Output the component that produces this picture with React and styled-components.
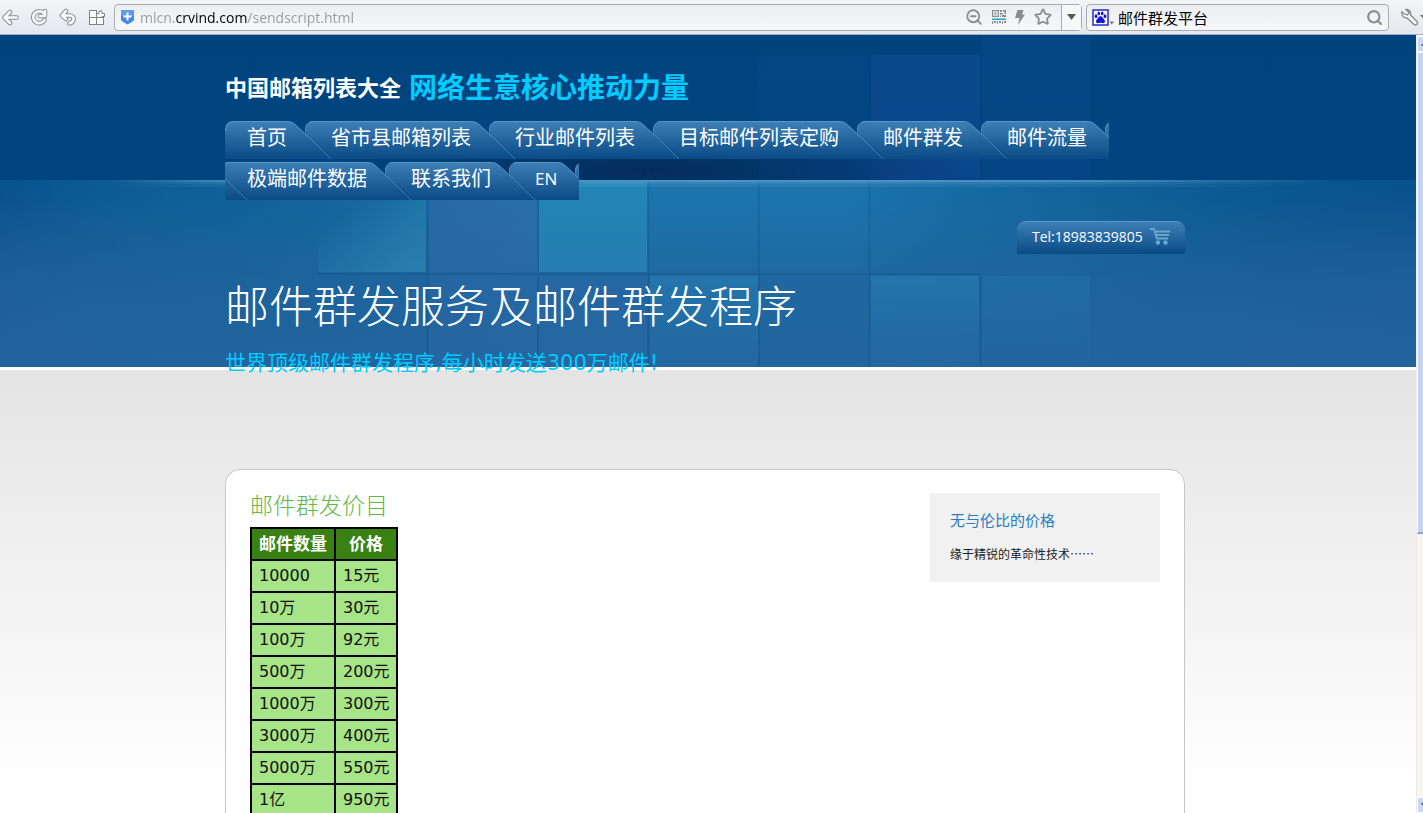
import React from 'react'
import styled, { createGlobalStyle, css } from 'styled-components'
import { ZoomOut, Search, Star } from 'lucide-react'

const latin = `'Open Sans', 'Noto Sans CJK SC', sans-serif`
const wide = `'DejaVu Sans', 'Noto Sans CJK SC', sans-serif`
const cjk = `'Noto Sans CJK SC', sans-serif`

const menu = [
  { title: '首页' },
  { title: '省市县邮箱列表' },
  { title: '行业邮件列表' },
  { title: '目标邮件列表定购' },
  { title: '邮件群发' },
  { title: '邮件流量' },
  { title: '极端邮件数据' },
  { title: '联系我们' },
  { title: 'EN', small: true },
]

const prices = [
  ['10000', '15元'],
  ['10万', '30元'],
  ['100万', '92元'],
  ['500万', '200元'],
  ['1000万', '300元'],
  ['3000万', '400元'],
  ['5000万', '550元'],
  ['1亿', '950元'],
]

// browser icons: grey outline with a white core
const Outlined = ({ d, size = 18 }) => (
  <svg width={size} height={size} viewBox="0 0 18 18" fill="none" strokeLinejoin="round">
    <path d={d} stroke="#8d8f93" strokeWidth="4.6" strokeLinecap="round" />
    <path d={d} stroke="#fafbfc" strokeWidth="2.6" strokeLinecap="round" />
  </svg>
)

const Panels = () => (
  <svg width="18" height="18" viewBox="0 0 18 18" fill="#fafbfc" stroke="#808286">
    <rect x="1.500" y="2.500" width="7" height="7" />
    <rect x="1.500" y="9.500" width="7" height="7" />
    <rect x="8.500" y="9.500" width="7" height="7" />
    <path d="M8.500 9.500v-4h2.500V3h3v2.500h2.500v3H14v1z" />
  </svg>
)

const Shield = () => (
  <svg width="15" height="16" viewBox="0 0 15 16">
    <path d="M1 1h13v9.500q0 1.500-1.500 2L7.500 15.500 2.500 12.500q-1.500-.5-1.500-2z" fill="#3f87e8" />
    <path d="M1 1h13v6H1z" fill="#5b9cf0" />
    <path d="M7.500 3.500v8M3.500 7.500h8" stroke="#fff" strokeWidth="2" />
  </svg>
)

const Barcode = () => (
  <svg width="14" height="14" viewBox="0 0 14 14" fill="#8a8c90">
    <path d="M0 0h7v7H0zM1.200 1.200v4.600h4.600V1.200z" fillRule="evenodd" />
    <path d="M2.500 2.500h2v2h-2zM8 0h2v2H8zM11 0h3v4h-1.500V1.500H11zM8 3h3v1.500H8zM10 5h4v2h-4zM8 5.500h1V7H8z" />
    <path d="M0 8.500h14V10H0z" fill="#1ba7c4" />
    <path d="M0 11h1v3H0zM2 11h2v2H2zM5 11h1v3H5zM7 11h2v2H7zM10 11h1v3h-1zM12 11h2v2h-2z" />
  </svg>
)

const Bolt = () => (
  <svg width="10" height="15" viewBox="0 0 10 15">
    <path d="M2.500 0h6L7 4.500h3L3 15l1.500-7H0z" fill="#8a8c90" />
  </svg>
)

const Paw = () => (
  <svg width="22" height="17" viewBox="0 0 22 17">
    <rect x="1" y="1" width="15" height="15" fill="#fff" stroke="#1a1ac8" strokeWidth="1.400" />
    <g fill="#1414e0">
      <ellipse cx="4" cy="7.200" rx="1.400" ry="1.900" />
      <ellipse cx="6.800" cy="4.400" rx="1.300" ry="1.900" />
      <ellipse cx="10.200" cy="4.400" rx="1.300" ry="1.900" />
      <ellipse cx="13" cy="7.200" rx="1.400" ry="1.900" />
      <path d="M8.500 7.200c2 0 2 1.800 3.500 3s1.200 4-.8 4c-1.200 0-1.600-.4-2.700-.4s-1.500.4-2.700.4c-2 0-2.300-2.800-.8-4s1.500-3 3.500-3z" />
    </g>
    <path d="M17.500 12.500h4.500l-2.200 3z" fill="#777" />
  </svg>
)

const Cart = () => (
  <svg width="20" height="17" viewBox="0 0 20 17" fill="#6ba5cc">
    <path d="M0 0h4.600l.8 2.500H20v2H6.200l.4 1.500H19v2H7.200l.4 1.500H18v2H6L3.400 2H0z" />
    <circle cx="8" cy="14.500" r="2.200" />
    <circle cx="15.500" cy="14.500" r="2.200" />
  </svg>
)

const CapGradient = ({ id }) => (
  <linearGradient id={id} x1="0" y1="0" x2="0" y2="38" gradientUnits="userSpaceOnUse">
    <stop offset="0" stopColor="#3d7fb5" />
    <stop offset="1" stopColor="#0a4a86" />
  </linearGradient>
)

const LeftCap = ({ first }) => (
  <svg width="22" height="38" viewBox="0 0 22 38">
    <CapGradient id="capLeft" />
    {first ? (
      <>
        <path d="M0 38V9Q0 0 9 0h13v38z" fill="url(#capLeft)" />
        <path d="M0.500 10Q1 .5 9 .5h13" fill="none" stroke="#5b97c6" />
      </>
    ) : (
      <>
        <path d="M0 38V1l3-1h19v38z" fill="url(#capLeft)" />
        <path d="M3 16 22 35v3z" fill="#0a3a70" opacity=".15" />
        <path d="M0 1.500 3 .5h19" fill="none" stroke="#5b97c6" />
        <path d="M0 16 22 38" stroke="#5b97c6" opacity=".6" />
      </>
    )}
  </svg>
)

const RightCap = () => (
  <svg width="22" height="38" viewBox="0 0 22 38">
    <CapGradient id="capRight" />
    <path d="M0 38V0Q5 0 8 3l10 9V7q1-4 4-5.500V38z" fill="url(#capRight)" />
    <path d="M0 .5Q5 .5 8 3.500L22 16.500" fill="none" stroke="#5b97c6" opacity=".8" />
    <path d="M18.500 11V7q1-4 3.500-5.500" fill="none" stroke="#5b97c6" opacity=".7" />
  </svg>
)

// translucent squares behind the header
const Tiles = () => (
  <Backdrop viewBox="0 0 1416 332" preserveAspectRatio="xMidYMin slice" aria-hidden="true">
    <defs>
      <linearGradient id="lowerBase" x1="0" y1="0" x2="0" y2="1">
        <stop offset="0" stopColor="#08528e" />
        <stop offset="1" stopColor="#1a5994" />
      </linearGradient>
      <linearGradient id="lowerGlow" x1="0" y1="0" x2="1" y2="0">
        <stop offset="0" stopColor="#1b75ad" stopOpacity="0" />
        <stop offset=".15" stopColor="#12699f" stopOpacity=".6" />
        <stop offset=".4" stopColor="#1c74ac" />
        <stop offset=".6" stopColor="#1b74ac" />
        <stop offset=".8" stopColor="#12669c" stopOpacity=".7" />
        <stop offset="1" stopColor="#0b5a94" stopOpacity="0" />
      </linearGradient>
      <linearGradient id="lowerFade" x1="0" y1="0" x2="0" y2="1">
        <stop offset=".1" stopColor="#23639e" stopOpacity="0" />
        <stop offset=".55" stopColor="#21629c" stopOpacity=".7" />
        <stop offset="1" stopColor="#23649e" stopOpacity=".9" />
      </linearGradient>
      <linearGradient id="tileLight" x1="0" y1="0" x2="0" y2="1">
        <stop offset="0" stopColor="#2186b6" />
        <stop offset="1" stopColor="#267db3" />
      </linearGradient>
      <linearGradient id="tileUp" x1="0" y1="0" x2="0" y2="1">
        <stop offset="0" stopColor="#2377ad" stopOpacity=".9" />
        <stop offset="1" stopColor="#2468a2" stopOpacity=".6" />
      </linearGradient>
      <linearGradient id="tileSide" x1="0" y1="0" x2="1" y2="1">
        <stop offset=".3" stopColor="#2f93b8" stopOpacity="0" />
        <stop offset="1" stopColor="#2f86b0" stopOpacity=".75" />
      </linearGradient>
      <linearGradient id="violet" x1="0" y1="0" x2="0" y2="1">
        <stop offset="0" stopColor="#12509a" stopOpacity=".5" />
        <stop offset="1" stopColor="#0e4690" stopOpacity=".7" />
      </linearGradient>
      <radialGradient id="navShade">
        <stop offset="0" stopColor="#052450" stopOpacity=".75" />
        <stop offset="1" stopColor="#052450" stopOpacity="0" />
      </radialGradient>
      <linearGradient id="horizon" x1="0" y1="0" x2="1" y2="0">
        <stop offset="0" stopColor="#7ab4da" stopOpacity="0" />
        <stop offset=".1" stopColor="#7ab4da" stopOpacity=".5" />
        <stop offset=".8" stopColor="#7ab4da" stopOpacity=".5" />
        <stop offset="1" stopColor="#7ab4da" stopOpacity="0" />
      </linearGradient>
      <linearGradient id="lines" x1="0" y1="0" x2="0" y2="1">
        <stop offset="0" stopColor="#06406f" stopOpacity=".15" />
        <stop offset="1" stopColor="#06406f" stopOpacity=".25" />
      </linearGradient>
    </defs>

    <rect x="759" y="20" width="110" height="125" fill="url(#violet)" opacity=".35" />
    <rect x="871" y="20" width="109" height="125" fill="url(#violet)" />
    <rect x="982" y="0" width="109" height="145" fill="url(#violet)" opacity=".4" />
    <ellipse cx="650" cy="135" rx="320" ry="50" fill="url(#navShade)" />

    <rect y="145" width="1416" height="187" fill="url(#lowerBase)" />
    <rect y="145" width="1416" height="187" fill="url(#lowerGlow)" />
    <rect y="145" width="1416" height="187" fill="url(#lowerFade)" />

    <rect x="318" y="147" width="108" height="90" fill="url(#tileSide)" />
    <rect x="429" y="147" width="108" height="90" fill="#3a6ba8" opacity=".45" />
    <rect x="539" y="147" width="108" height="90" fill="url(#tileLight)" />
    <rect x="429" y="241" width="218" height="91" fill="#2c68a6" opacity=".4" />
    <rect x="650" y="241" width="108" height="91" fill="url(#tileUp)" />
    <rect x="871" y="241" width="108" height="91" fill="url(#tileUp)" />
    <rect x="982" y="241" width="108" height="91" fill="url(#tileUp)" opacity=".5" />
    <path
      d="M427.500 147v185M538 147v185M648.500 120v212M759 20v312M869.500 0v332M980.500 0v145M980.500 240v92M318 239h662"
      stroke="url(#lines)"
      strokeWidth="2"
    />

    <rect x="110" y="145" width="1220" height="2" fill="url(#horizon)" />
    <rect x="110" y="147" width="1220" height="2" fill="url(#horizon)" opacity=".5" />
    <rect x="110" y="149" width="1220" height="3" fill="url(#horizon)" opacity=".25" />
  </Backdrop>
)

const App = () => (
  <Shell>
    <GlobalStyle />
    <Toolbar>
      <IconButton aria-label="Back">
        <Outlined d="M9 4 3.500 9.500 9 15M4 9.500h11.500" />
      </IconButton>
      <IconButton aria-label="Reload">
        <Outlined d="M13.500 5A6 6 0 1 0 14.500 12M15 3v5h-5" />
      </IconButton>
      <IconButton aria-label="Undo">
        <Outlined d="M7 3 3 7.500 7 11M4 7.500h7q4 .5 3.500 4-.5 3-4 4" />
      </IconButton>
      <IconButton aria-label="Panels">
        <Panels />
      </IconButton>
      <Field grow={1}>
        <Shield />
        <Address aria-label="Address" defaultValue="mlcn.crvind.com/sendscript.html" />
        <Actions>
          <ZoomOut size={18} strokeWidth={2.4} />
          <Barcode />
          <Bolt />
          <Star size={18} strokeWidth={2.4} />
        </Actions>
        <DropButton aria-label="History">
          <svg width="9" height="6" viewBox="0 0 9 6">
            <path d="M0 0h9L4.500 6z" fill="#555" />
          </svg>
        </DropButton>
      </Field>
      <Field>
        <Paw />
        <Query aria-label="Search" defaultValue="邮件群发平台" />
        <Search size={17} strokeWidth={3} />
      </Field>
      <Tools>
        <IconButton aria-label="Settings">
          <svg width="19" height="18" viewBox="0 0 19 18">
            <path
              d="M5 1.500 8 4.500 6.500 7 3.500 6 1 4c-.5 3 1 6 5 6l7 6.500c2 1.500 4.500-1 3-3L9.500 7C10 3.500 8 1 5 1.500z"
              fill="#fafbfc"
              stroke="#85878b"
              strokeWidth="1.300"
            />
          </svg>
        </IconButton>
        <svg width="7" height="5" viewBox="0 0 7 5">
          <path d="M0 0h7L3.500 4z" fill="#777" />
        </svg>
      </Tools>
    </Toolbar>

    <Viewport>
      <Page>
        <Header>
          <Tiles />
          <Edges>
            <Brand>
              <Logo href="#">中国邮箱列表大全</Logo>
              <Slogan>网络生意核心推动力量</Slogan>
            </Brand>
            <nav>
              <Navigation>
                {menu.map((o, i) => (
                  <li key={o.title}>
                    <MenuLink href="#">
                      <LeftCap first={i === 0} />
                      <MenuLabel small={o.small ? 1 : 0}>{o.title}</MenuLabel>
                      <RightCap />
                    </MenuLink>
                  </li>
                ))}
              </Navigation>
            </nav>
            <Phone href="tel:18983839805">
              Tel:18983839805
              <Cart />
            </Phone>
            <Title>邮件群发服务及邮件群发程序</Title>
            <Subtitle>世界顶级邮件群发程序,每小时发送300万邮件!</Subtitle>
          </Edges>
        </Header>

        <Main>
          <Edges>
            <Card>
              <section>
                <Heading>邮件群发价目</Heading>
                <Table>
                  <thead>
                    <tr>
                      <Th width={84}>邮件数量</Th>
                      <Th width={62}>价格</Th>
                    </tr>
                  </thead>
                  <tbody>
                    {prices.map(([amount, price]) => (
                      <tr key={amount}>
                        <Td>{amount}</Td>
                        <Td>{price}</Td>
                      </tr>
                    ))}
                  </tbody>
                </Table>
              </section>
              <Aside>
                <AsideTitle>无与伦比的价格</AsideTitle>
                <AsideText>缘于精锐的革命性技术……</AsideText>
              </Aside>
            </Card>
          </Edges>
        </Main>
      </Page>
      <Scrollbar aria-hidden="true">
        <ScrollArrow>
          <path d="M3 10 8 5l5 5z" fill="#3c5080" />
        </ScrollArrow>
        <Thumb />
        <ScrollArrow>
          <path d="M3 6l5 5 5-5z" fill="#3c5080" />
        </ScrollArrow>
      </Scrollbar>
    </Viewport>
  </Shell>
)

const GlobalStyle = createGlobalStyle`
  * {
    box-sizing: border-box;
  }

  body {
    margin: 0;
    overflow: hidden;
    font-family: ${latin};
    color: #222;
  }

  svg {
    display: block;
    flex: none;
  }
`

const Shell = styled.div`
  display: flex;
  flex-direction: column;
  height: 100vh;
`

const Toolbar = styled.div`
  display: flex;
  align-items: center;
  flex: none;
  height: 35px;
  background: linear-gradient(#f3f4f7, #e4e7ed);
  border-bottom: 1px solid #9fb0c6;
  overflow: hidden;
`

const IconButton = styled.button`
  flex: none;
  margin: 0 10px 0 1px;
  padding: 0;
  border: 0;
  background: none;
`

const Field = styled.div`
  display: flex;
  align-items: center;
  gap: 5px;
  height: 27px;
  margin: 0 4px 0 0;
  padding: 0 5px;
  border: 1px solid #a9abb3;
  border-radius: 4px;
  background: linear-gradient(#eceef2, #f6f7f9);
  color: #8a8c90;

  ${({ grow }) =>
    grow
      ? css`
          flex: 1;
          padding-right: 0;
          margin-left: -2px;
        `
      : css`
          flex: none;
          width: 303px;
          gap: 4px;
        `}
`

const inputBase = css`
  flex: 1;
  min-width: 0;
  height: 25px;
  padding: 0;
  border: 0;
  outline: 0;
  font-family: ${latin};
`

// the domain part of the address stands out in black
const Address = styled.input`
  ${inputBase}
  font-size: 14px;
  background: linear-gradient(90deg, #999 35px, #000 35px, #000 107px, #999 107px);
  background-clip: text;
  color: transparent;
`

const Query = styled.input`
  ${inputBase}
  font-size: 15px;
  background: none;
  color: #000;
`

const Actions = styled.div`
  display: flex;
  align-items: center;
  gap: 9px;
  padding-right: 4px;
`

const DropButton = styled.button`
  display: flex;
  align-items: center;
  justify-content: center;
  width: 20px;
  height: 25px;
  padding: 0;
  border: 0;
  border-left: 1px solid #a9abb3;
  background: #f6f7f9;
`

const Tools = styled.div`
  display: flex;
  align-items: center;
  width: 30px;
  padding-left: 7px;
  overflow: hidden;

  button {
    margin-right: 0;
  }
`

const Viewport = styled.div`
  display: flex;
  flex: 1;
  min-height: 0;
`

const Page = styled.div`
  flex: 1;
  min-width: 0;
  overflow: hidden;
`

const Header = styled.header`
  position: relative;
  z-index: 1;
  padding-right: 6px;
  background: linear-gradient(#00447f, #004680);
  border-bottom: 3px solid #fff;
`

const Backdrop = styled.svg`
  position: absolute;
  top: 0;
  left: 0;
  width: 100%;
  height: 100%;
`

const Edges = styled.div`
  position: relative;
  display: flex;
  flex-direction: column;
  max-width: 960px;
  margin: 0 auto;
`

const Brand = styled.div`
  display: flex;
  align-items: center;
  gap: 8px;
  height: 86px;
  padding-top: 16px;
`

const Logo = styled.a`
  font-size: 22px;
  font-weight: 700;
  color: #fff;
  text-decoration: none;
`

const Slogan = styled.span`
  font-size: 28px;
  font-weight: 700;
  color: #0cf;
`

const Navigation = styled.ul`
  display: flex;
  flex-wrap: wrap;
  row-gap: 3px;
  margin: 0;
  padding: 0;
  list-style: none;
`

const MenuLink = styled.a`
  display: flex;
  height: 38px;
  color: #fff;
  text-decoration: none;
`

const MenuLabel = styled.span`
  height: 38px;
  border-top: 1px solid #5b97c6;
  background: linear-gradient(#3d7fb5, #0a4a86);
  font-size: ${({ small }) => (small ? 17 : 20)}px;
  line-height: 32px;
`

const Phone = styled.a`
  display: flex;
  align-items: center;
  align-self: flex-end;
  justify-content: space-between;
  width: 168px;
  height: 33px;
  margin-top: 21px;
  padding: 0 15px 3px;
  border-top: 1px solid #5b97c6;
  border-radius: 9px 9px 0 0;
  background: linear-gradient(#3d7fb5, #0a4a86);
  font-size: 14px;
  color: #fff;
  text-decoration: none;
`

const Title = styled.h1`
  margin: 22px 0 0;
  font-size: 44px;
  font-weight: 300;
  line-height: 60px;
  color: #fff;
`

const Subtitle = styled.p`
  margin: 15px 0 -8px;
  font-family: ${wide};
  font-size: 21px;
  line-height: 24px;
  color: #0cf;
`

const Main = styled.main`
  min-height: 100%;
  padding: 99px 6px 0 0;
  background: #fff linear-gradient(#e4e4e4, #fff) no-repeat;
  background-size: 100% 420px;
`

const Card = styled.div`
  display: flex;
  justify-content: space-between;
  align-items: flex-start;
  padding: 23px 24px 40px;
  border: 1px solid #c6c6c6;
  border-radius: 15px;
  background: #fff;
`

const Heading = styled.h2`
  margin: 0 0 10px;
  font-size: 23px;
  font-weight: 300;
  line-height: 24px;
  color: #5fb848;
`

const Table = styled.table`
  border-collapse: collapse;
  table-layout: fixed;
  width: 148px;
  font-family: ${wide};
  font-size: 16px;
`

const cell = css`
  height: 32px;
  border: 2px solid #000;
  line-height: 20px;
  white-space: nowrap;
`

const Th = styled.th`
  ${cell}
  width: ${({ width }) => width}px;
  padding: 0;
  background: #398113;
  font-size: 17px;
  color: #fff;
`

const Td = styled.td`
  ${cell}
  padding: 0 0 0 7px;
  background: #a7e387;
  color: #111;
`

const Aside = styled.aside`
  width: 230px;
  padding: 17px 20px 18px;
  background: #f1f1f1;
`

const AsideTitle = styled.h3`
  margin: 0 0 14px;
  font-size: 15px;
  font-weight: 400;
  line-height: 20px;
  color: #2a7dc0;
`

const AsideText = styled.p`
  margin: 0;
  font-family: ${cjk};
  font-size: 12px;
  line-height: 20px;
`

const Scrollbar = styled.div`
  display: flex;
  flex-direction: column;
  flex: none;
  width: 7px;
  padding-top: 1px;
  border-left: 1px solid #ecebe6;
  background: #f6f5f0;
  overflow: hidden;
`

const ScrollArrow = styled.svg.attrs({ viewBox: '0 0 16 16' })`
  width: 16px;
  height: 16px;
  margin-top: auto;
  border: 1px solid #fff;
  background: #c6d6fc;

  &:first-child {
    margin-top: 0;
  }
`

const Thumb = styled.div`
  height: 62%;
  width: 16px;
  border: 1px solid #fff;
  border-bottom: 2px solid #8aa4dc;
  background: #c3d4fc;
`

export default App
